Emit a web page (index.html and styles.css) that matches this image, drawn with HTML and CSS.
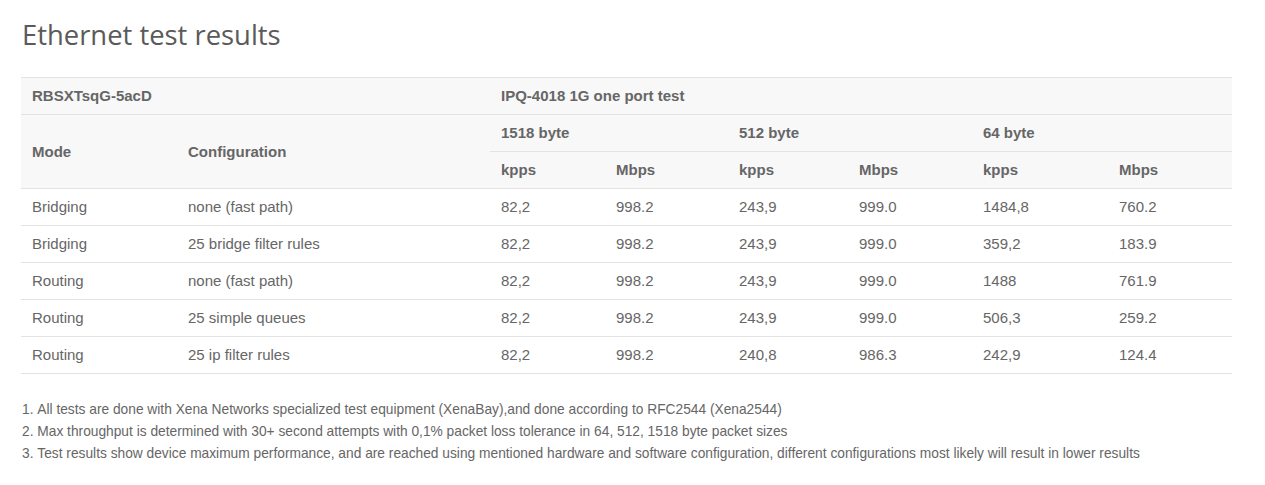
FILE: index.html
```html
<!DOCTYPE html>
<html>
<head>
<meta charset="utf-8">
<link rel="stylesheet" href="styles.css">
</head>
<body>
<div class="page">
  <h1 class="title">Ethernet test results</h1>
  <table class="results">
    <colgroup>
      <col class="c1"><col class="c2"><col class="c3"><col class="c4"><col class="c5"><col class="c6"><col class="c7"><col class="c8">
    </colgroup>
    <thead>
      <tr>
        <th colspan="2">RBSXTsqG-5acD</th>
        <th colspan="6">IPQ-4018 1G one port test</th>
      </tr>
      <tr>
        <th rowspan="2">Mode</th>
        <th rowspan="2">Configuration</th>
        <th colspan="2">1518 byte</th>
        <th colspan="2">512 byte</th>
        <th colspan="2">64 byte</th>
      </tr>
      <tr>
        <th>kpps</th><th>Mbps</th><th>kpps</th><th>Mbps</th><th>kpps</th><th>Mbps</th>
      </tr>
    </thead>
    <tbody>
      <tr><td>Bridging</td><td>none (fast path)</td><td>82,2</td><td>998.2</td><td>243,9</td><td>999.0</td><td>1484,8</td><td>760.2</td></tr>
      <tr><td>Bridging</td><td>25 bridge filter rules</td><td>82,2</td><td>998.2</td><td>243,9</td><td>999.0</td><td>359,2</td><td>183.9</td></tr>
      <tr><td>Routing</td><td>none (fast path)</td><td>82,2</td><td>998.2</td><td>243,9</td><td>999.0</td><td>1488</td><td>761.9</td></tr>
      <tr><td>Routing</td><td>25 simple queues</td><td>82,2</td><td>998.2</td><td>243,9</td><td>999.0</td><td>506,3</td><td>259.2</td></tr>
      <tr><td>Routing</td><td>25 ip filter rules</td><td>82,2</td><td>998.2</td><td>240,8</td><td>986.3</td><td>242,9</td><td>124.4</td></tr>
    </tbody>
  </table>
  <ol class="notes">
    <li>All tests are done with Xena Networks specialized test equipment (XenaBay),and done according to RFC2544 (Xena2544)</li>
    <li>Max throughput is determined with 30+ second attempts with 0,1% packet loss tolerance in 64, 512, 1518 byte packet sizes</li>
    <li>Test results show device maximum performance, and are reached using mentioned hardware and software configuration, different configurations most likely will result in lower results</li>
  </ol>
</div>
</body>
</html>
```

FILE: styles.css
```css
html, body {
  margin: 0;
  padding: 0;
  background: #fff;
}
.page {
  padding: 16px 33px 0 21px;
  font-family: "Liberation Sans", Arial, sans-serif;
  color: #666;
}
.title {
  margin: 0 0 23px 1px;
  font-family: "Open Sans", sans-serif;
  font-weight: 400;
  font-size: 27.4px;
  line-height: 38px;
  color: #5a5a5a;
}
.results {
  width: 1211px;
  border-collapse: collapse;
  table-layout: fixed;
  font-size: 15px;
}
.c1 { width: 156px; }
.c2 { width: 313px; }
.c3 { width: 115px; }
.c4 { width: 123px; }
.c5 { width: 120px; }
.c6 { width: 124px; }
.c7 { width: 136px; }
.c8 { width: 124px; }
.results th, .results td {
  text-align: left;
  padding: 0 10px 1px 11px;
  height: 35px;
  border-top: 1px solid #e3e3e3;
  border-bottom: 1px solid #e3e3e3;
  vertical-align: middle;
}
.results th {
  background: #f8f8f8;
  font-weight: 700;
  color: #666;
}
.results td {
  color: #666;
}
.notes {
  margin: 25px 0 0 0;
  padding: 0 0 0 1px;
  list-style-position: inside;
  font-size: 13.75px;
  line-height: 22px;
  color: #666;
}
```
